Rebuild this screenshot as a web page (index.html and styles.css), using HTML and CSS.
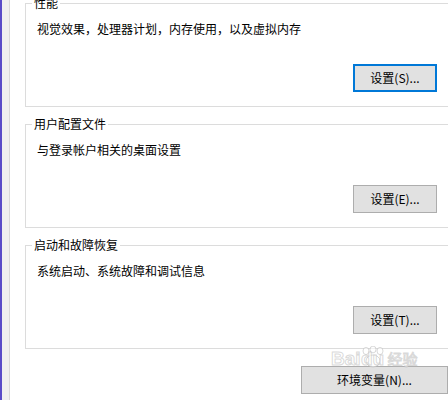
FILE: index.html
```html
<!DOCTYPE html>
<html lang="zh-CN">
<head>
<meta charset="utf-8">
<title>系统属性 - 高级</title>
<link rel="stylesheet" href="styles.css">
</head>
<body>
<div class="window">
  <div class="edge-accent"></div>
  <div class="edge-panel"></div>
  <div class="content">
    <div class="group">
      <div class="group-title">性能</div>
      <div class="group-desc">视觉效果，处理器计划，内存使用，以及虚拟内存</div>
      <div class="group-actions"><button class="btn btn-focus">设置(S)...</button></div>
    </div>
    <div class="group">
      <div class="group-title">用户配置文件</div>
      <div class="group-desc">与登录帐户相关的桌面设置</div>
      <div class="group-actions"><button class="btn">设置(E)...</button></div>
    </div>
    <div class="group">
      <div class="group-title">启动和故障恢复</div>
      <div class="group-desc">系统启动、系统故障和调试信息</div>
      <div class="group-actions"><button class="btn">设置(T)...</button></div>
    </div>
    <div class="footer-actions">
      <button class="btn btn-wide">环境变量(N)...</button>
      <div class="watermark">
        <span class="wm-bai">Bai</span><svg class="wm-paw" width="26" height="22" viewBox="0 0 26 22"><ellipse cx="6" cy="5" rx="3" ry="3.6"/><ellipse cx="13" cy="3.5" rx="3" ry="3.4"/><ellipse cx="20" cy="5" rx="3" ry="3.6"/><ellipse cx="13" cy="15" rx="7" ry="6"/></svg><span class="wm-du">du</span><span class="wm-jy">经验</span>
      </div>
    </div>
  </div>
</div>
</body>
</html>
```

FILE: styles.css
```css
* { box-sizing: border-box; }

html, body {
  margin: 0;
  padding: 0;
  width: 448px;
  height: 400px;
  overflow: hidden;
  background: #ffffff;
  font-family: "Noto Sans CJK SC", "Noto Sans", sans-serif;
  font-size: 12px;
  color: #000000;
}

.window {
  display: flex;
  height: 400px;
}

.edge-accent {
  width: 2px;
  flex: none;
  background: #5a4cc8;
}

.edge-panel {
  width: 8px;
  flex: none;
  background: #f0f0f0;
  border-right: 1px solid #d9d9d9;
}

.content {
  flex: none;
  width: 438px;
  padding: 3px 0 0 15px;
}

.group {
  height: 104px;
  border: 1px solid #dcdcdc;
  margin-bottom: 17px;
  padding: 0 11px 0 11px;
  width: 424px;
}

.group-title {
  width: max-content;
  margin: -8px 0 0 -5px;
  padding: 0 2px;
  line-height: 14px;
  height: 14px;
  background: #ffffff;
}

.group-desc {
  margin-top: 11px;
  line-height: 16px;
  height: 16px;
  white-space: nowrap;
}

.group-actions {
  display: flex;
  justify-content: flex-end;
  margin-top: 27px;
}

.btn {
  width: 84px;
  height: 28px;
  margin: 0;
  padding: 0;
  border: 1px solid #adadad;
  background: #e1e1e1;
  font-family: inherit;
  font-size: 12px;
  color: #000000;
  line-height: 26px;
  text-align: center;
}

.btn-focus {
  border: 2px solid #0078d7;
  line-height: 24px;
}

.footer-actions {
  position: relative;
  display: flex;
  justify-content: flex-end;
  width: 423px;
}

.btn-wide {
  width: 147px;
}

.watermark {
  position: absolute;
  left: 306px;
  top: -20px;
  display: flex;
  align-items: flex-end;
  color: rgba(255, 255, 255, 0.7);
  -webkit-text-stroke: 1px rgba(185, 185, 185, 0.55);
  pointer-events: none;
  font-family: "Liberation Sans", "Noto Sans CJK SC", sans-serif;
  font-weight: bold;
  font-size: 19px;
  line-height: 18px;
}

.wm-paw {
  fill: rgba(255, 255, 255, 0.6);
  stroke: rgba(185, 185, 185, 0.55);
  stroke-width: 1;
  margin: 0 0 0 -1px;
}

.wm-du {
  margin-left: -26px;
  width: 26px;
  text-align: center;
}

.wm-jy {
  font-family: "Noto Sans CJK SC", sans-serif;
  font-weight: normal;
  font-size: 15px;
  margin-left: 2px;
}
```
